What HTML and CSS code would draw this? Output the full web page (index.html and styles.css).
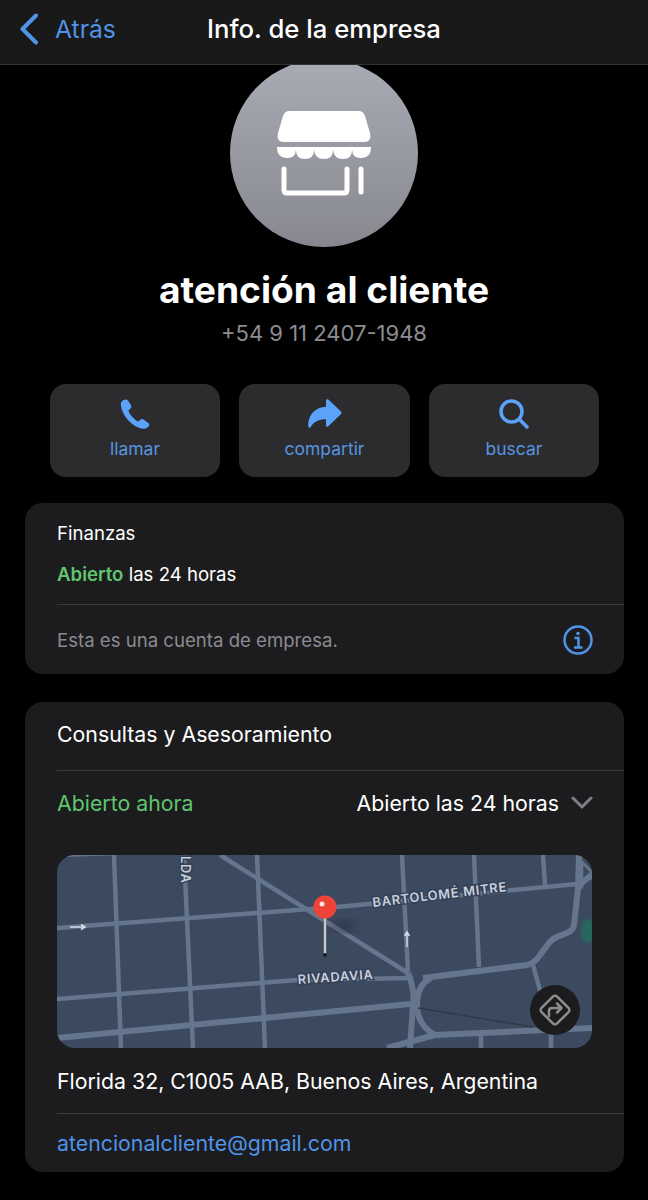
FILE: index.html
```html
<!DOCTYPE html>
<html lang="es">

<head>
    <meta charset="UTF-8">
    <meta name="viewport" content="width=device-width, initial-scale=1.0">
    <title>Info. de la empresa</title>
    <link rel="stylesheet" href="styles.css">
</head>

<body>
    <!-- Top bar -->
    <header class="topbar">
        <a class="back">
            <svg class="back-icon" viewBox="0 0 20 32" width="20" height="32">
                <path d="M17 2.500 L3.500 16 L17 29.500" />
            </svg>
            <span>Atrás</span>
        </a>
        <h1>Info. de la empresa</h1>
    </header>

    <main>
        <!-- Profile -->
        <section class="profile">
            <div class="avatar-clip">
                <div class="avatar">
                    <svg viewBox="0 0 94 86" width="94" height="86">
                        <path class="shop-fill" d="M12 1 H82 Q86 1 88 6 L93 23 Q95 32 87 32 H7 Q-1 32 1 23 L6 6 Q8 1 12 1 Z" />
                        <path class="shop-fill" d="M0 37 H94 V38 Q94 47 85 48 Q76 49 75 40 Q75 49 66 49 Q57 49 56 40 Q56 49 47 49 Q38 49 37 40 Q37 49 28 49 Q19 49 19 40 Q18 49 9 48 Q0 47 0 38 Z" />
                        <path class="shop-line" d="M7 59 V80 Q7 83 10 83 H67 Q70 83 70 80 V59" />
                        <path class="shop-line" d="M84 59 V82" />
                    </svg>
                </div>
            </div>
            <h2 class="name">atención al cliente</h2>
            <p class="phone">+54 9 11 2407-1948</p>
        </section>

        <!-- Actions -->
        <section class="actions">
            <a class="action">
                <svg viewBox="0 0 30 30" width="30" height="30">
                    <path class="icon-fill" d="M3.200 1.200 C1.400 2.200 .6 4 .9 6.400 C1.600 12 5 18 9.500 22.400 C13.500 26.300 18.500 29.300 23 29.700 C25.600 30 27.700 28.800 28.900 27 C29.700 25.800 29.500 24.800 28.400 24 L23.500 20.500 C22.400 19.700 21.300 19.800 20.300 20.700 L18.800 22 C18.200 22.500 17.600 22.500 17 22.100 C15.400 21 13.500 19.300 12 17.500 C10.600 15.900 9.400 14 8.700 12.500 C8.400 11.800 8.500 11.300 9.100 10.800 L10.600 9.400 C11.600 8.400 11.700 7.300 11 6.200 L8 1.600 C7 .1 5.200 0 3.200 1.200 Z" />
                </svg>
                <span>llamar</span>
            </a>
            <a class="action">
                <svg viewBox="0 0 34 30" width="34" height="30">
                    <path class="icon-fill" d="M18 1.500 C18 .2 19.300 -.3 20.300 .6 L32.800 12.300 C33.700 13.200 33.700 14.300 32.800 15.200 L20.300 27.300 C19.300 28.200 18 27.700 18 26.400 V20.300 C10.500 20.300 5.800 22.800 2.600 28 C2 29 .4 28.800 .3 27.400 C-.3 17 6 8.300 18 7.700 Z" />
                </svg>
                <span>compartir</span>
            </a>
            <a class="action">
                <svg viewBox="0 0 30 30" width="30" height="30">
                    <circle class="icon-line" cx="12.500" cy="12.500" r="10.500" />
                    <path class="icon-line" d="M20.500 20.500 L28 28" />
                </svg>
                <span>buscar</span>
            </a>
        </section>

        <!-- Business category card -->
        <section class="card card-small">
            <div class="small-top">
                <p class="small-title">Finanzas</p>
                <p class="small-hours"><span class="open-bold">Abierto</span> las 24 horas</p>
            </div>
            <div class="row small-row">
                <span class="muted">Esta es una cuenta de empresa.</span>
                <svg class="info-icon" viewBox="0 0 30 30" width="30" height="30">
                    <circle cx="15" cy="15" r="13.500" />
                    <circle class="info-dot" cx="15" cy="8.500" r="1.800" />
                    <path d="M11.500 13 H15.500 V22 M11 22.500 H19.500" />
                </svg>
            </div>
        </section>

        <!-- Contact card -->
        <section class="card card-big">
            <p class="big-title">Consultas y Asesoramiento</p>
            <div class="row big-row">
                <span class="open">Abierto ahora</span>
                <span class="hours">
                    Abierto las 24 horas
                    <svg class="hours-chevron" viewBox="0 0 22 13" width="22" height="13">
                        <path d="M2 2 L11 11 L20 2" />
                    </svg>
                </span>
            </div>
            <div class="map-wrap">
                <svg class="map" viewBox="0 0 535 193" width="535" height="193">
                    <defs>
                        <linearGradient id="stick" x1="0" x2="1" y1="0" y2="0">
                            <stop offset="0" stop-color="#77787c" />
                            <stop offset=".5" stop-color="#f0f0f2" />
                            <stop offset="1" stop-color="#77787c" />
                        </linearGradient>
                        <filter id="blur"><feGaussianBlur stdDeviation="6" /></filter>
                        <filter id="blur-small"><feGaussianBlur stdDeviation="1.500" /></filter>
                    </defs>
                    <rect width="535" height="193" fill="#3c4a60" />

                    <ellipse cx="531" cy="76" rx="7" ry="12" fill="#27665c" filter="url(#blur-small)" />

                    <g class="road">
                        <path d="M57 0 L64 193" />
                        <path d="M127 0 L136 193" />
                        <path d="M200 0 L208 193" />
                        <path d="M163 0 L351 118" />
                        <path d="M345 0 L351 117" />
                        <path d="M417 0 L422 112" />
                        <path d="M486 0 L488 30" />
                        <path d="M0 73 L280 52 L520 29" />
                        <path d="M0 144 L240 125 L356 123" />
                        <path d="M476 110 L483 135 L484 178" />
                        <path d="M424 193 L424 178" />
                        <path d="M494 193 L494 176" />
                        <path d="M0 0 L60 -2" />
                    </g>
                    <g class="road road-wide">
                        <path d="M0 183 L353 149" />
                        <path d="M366 123 L470 110 Q478 108 483 100 L492 88 Q497 82 505 80 L512 77 Q516 75 517 70 L521 33 L522 0" />
                        <path d="M351 118 Q358 135 356 150 L353 193" />
                        <path d="M374 123 Q360 130 360 150 Q360 170 378 180 L535 173" />
                        <path d="M330 193 L378 180" />
                        <path d="M522 33 Q526 24 535 21" />
                    </g>
                    <path class="road-thin" d="M525 7 L535 17 L525 26 Z" />
                    <path class="rail" d="M361 153 L476 172" />

                    <ellipse cx="287" cy="71" rx="12" ry="6" fill="#1c2430" opacity=".5" filter="url(#blur)" />

                    <g class="arrow">
                        <path d="M13 72 H27 M24 69.500 L28 72 L24 74.500" />
                        <path d="M350 92 V78 M347.500 81 L350 77 L352.500 81" />
                    </g>

                    <!-- street labels -->
                    <text class="street" transform="translate(316 52) rotate(-6.800)">BARTOLOMÉ MITRE</text>
                    <text class="street" transform="translate(241 129) rotate(-4)">RIVADAVIA</text>
                    <text class="street" transform="translate(124 1) rotate(90)">LDA</text>

                    <!-- pin -->
                    <rect x="266.500" y="62" width="3" height="38" fill="url(#stick)" />
                    <circle cx="268" cy="100" r="2" fill="#1d1d20" />
                    <circle cx="268" cy="52" r="11.500" fill="#ee4337" />
                    <circle cx="265" cy="49" r="2.500" fill="#fbe3df" />

                    <!-- directions button -->
                    <circle cx="498" cy="155" r="25" fill="#1c1c1e" />
                    <g class="directions">
                        <rect x="487" y="144" width="22" height="22" rx="3" transform="rotate(45 498 155)" />
                        <path d="M492 161 V156 Q492 153 495 153 H504 M500 148.500 L504.500 153 L500 157.500" />
                    </g>
                </svg>
            </div>
            <p class="address">Florida 32, C1005 AAB, Buenos Aires, Argentina</p>
            <div class="row mail-row">
                <a class="mail">atencionalcliente@gmail.com</a>
            </div>
        </section>
    </main>
</body>

</html>
```

FILE: styles.css
```css
* {
    margin: 0;
    padding: 0;
    box-sizing: border-box;
}

body {
    font-family: Inter, 'Liberation Sans', Arial, sans-serif;
    background-color: #000;
    color: #fff;
    height: 1200px;
    overflow: hidden;
}

/* top bar */
.topbar {
    height: 65px;
    background-color: #191919;
    border-bottom: 1px solid #333;
    display: flex;
    align-items: center;
    justify-content: center;
    position: relative;
}

.topbar h1 {
    font-size: 25.700px;
    font-weight: 500;
    margin-bottom: 7px;
}

.back {
    position: absolute;
    left: 19px;
    top: 13px;
    display: flex;
    align-items: center;
    gap: 16px;
    color: #4f94e8;
    font-size: 24.700px;
}

.back-icon path {
    fill: none;
    stroke: #4f94e8;
    stroke-width: 4;
    stroke-linecap: round;
    stroke-linejoin: round;
}

/* profile */
.profile {
    display: flex;
    flex-direction: column;
    align-items: center;
}

.avatar-clip {
    height: 182px;
    width: 188px;
    overflow: hidden;
}

.avatar {
    width: 188px;
    height: 188px;
    margin-top: -6px;
    border-radius: 50%;
    background: linear-gradient(#a9abb5, #87888f);
    display: flex;
    align-items: center;
    justify-content: center;
}

.shop-fill {
    fill: #fff;
}

.shop-line {
    fill: none;
    stroke: #fff;
    stroke-width: 5;
    stroke-linecap: round;
}

.name {
    font-size: 37.200px;
    font-weight: 700;
    line-height: 44px;
    margin-top: 21px;
}

.phone {
    font-size: 22px;
    color: #8c8c91;
    line-height: 28px;
    margin-top: 7px;
}

/* action buttons */
.actions {
    display: grid;
    grid-template-columns: 170px 171px 170px;
    gap: 19px;
    padding-left: 50px;
    margin-top: 37px;
}

.action {
    height: 93px;
    background-color: #2c2c2e;
    border-radius: 16px;
    display: flex;
    flex-direction: column;
    align-items: center;
    padding-top: 15px;
    color: #5795e2;
    font-size: 17.500px;
}

.action span {
    margin-top: 9px;
}

.icon-fill {
    fill: #5aa2fa;
}

.icon-line {
    fill: none;
    stroke: #5aa2fa;
    stroke-width: 3.500;
    stroke-linecap: round;
}

/* cards */
.card {
    width: 599px;
    margin-left: 25px;
    background-color: #1c1c1e;
    border-radius: 18px;
    overflow: hidden;
    padding-left: 32px;
}

.card-small {
    height: 171px;
    margin-top: 26px;
}

.card-big {
    height: 470px;
    margin-top: 28px;
}

.small-top {
    height: 101px;
    padding-top: 19px;
    font-size: 18.600px;
}

.small-hours {
    margin-top: 19px;
}

.open-bold {
    color: #5fc66e;
    font-weight: 600;
}

.row {
    border-top: 1px solid #3a3a3c;
    display: flex;
    align-items: center;
    justify-content: space-between;
    padding-right: 31px;
}

.small-row {
    height: 70px;
}

.muted {
    color: #8b8b90;
    font-size: 18.600px;
}

.info-icon circle,
.info-icon path {
    fill: none;
    stroke: #4f94e8;
    stroke-width: 2.500;
}

.info-icon .info-dot {
    fill: #4f94e8;
    stroke: none;
}

.big-title {
    height: 68px;
    line-height: 64px;
    font-size: 21.300px;
}

.big-row {
    height: 66px;
    font-size: 21.300px;
    padding-bottom: 2px;
}

.open {
    color: #5fc66e;
}

.hours {
    display: flex;
    align-items: center;
    gap: 12px;
}

.hours-chevron path {
    fill: none;
    stroke: #7f7f84;
    stroke-width: 3;
    stroke-linecap: round;
    stroke-linejoin: round;
}

/* map */
.map-wrap {
    width: 535px;
    height: 193px;
    margin-top: 19px;
    border-radius: 18px;
    overflow: hidden;
}

.map {
    display: block;
}

.road path {
    fill: none;
    stroke: #66758e;
    stroke-width: 4.500;
}

.road-wide path {
    stroke-width: 6;
}

.road-thin {
    fill: none;
    stroke: #66758e;
    stroke-width: 2.500;
}

.rail {
    fill: none;
    stroke: #2f3a4c;
    stroke-width: 1.500;
}

.arrow path {
    fill: none;
    stroke: #d5dbe5;
    stroke-width: 1.500;
}

.street {
    font-family: Inter, 'Liberation Sans', sans-serif;
    font-size: 12.800px;
    font-weight: 600;
    letter-spacing: .8px;
    fill: #c9d0dc;
    paint-order: stroke;
    stroke: #344157;
    stroke-width: 3px;
}

.directions rect,
.directions path {
    fill: none;
    stroke: #8d8d90;
    stroke-width: 2.500;
    stroke-linejoin: round;
    stroke-linecap: round;
}

/* address and mail */
.address {
    height: 65px;
    line-height: 66px;
    font-size: 21.300px;
}

.mail-row {
    height: 60px;
    padding-bottom: 2px;
}

.mail {
    color: #4f94e8;
    font-size: 21.300px;
}
```
